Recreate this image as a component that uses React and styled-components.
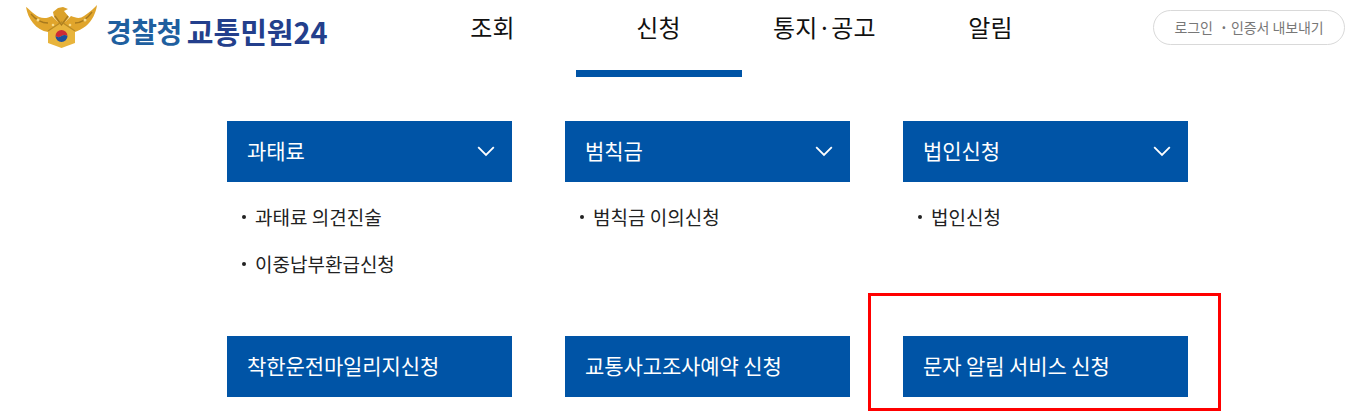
import React from 'react';
import styled, { createGlobalStyle } from 'styled-components';

const GlobalStyle = createGlobalStyle`
  html, body {
    margin: 0;
    padding: 0;
    background: #fff;
    overflow: hidden;
  }
  body {
    font-family: "Noto Sans CJK KR", "Noto Sans", sans-serif;
    color: #222;
  }
  ul {
    margin: 0;
    padding: 0;
    list-style: none;
  }
`;

const topSections = [
  { title: '과태료', links: ['과태료 의견진술', '이중납부환급신청'] },
  { title: '범칙금', links: ['범칙금 이의신청'] },
  { title: '법인신청', links: ['법인신청'] },
];

const bottomSections = ['착한운전마일리지신청', '교통사고조사예약 신청', '문자 알림 서비스 신청'];

const navItems = ['조회', '신청', '통지·공고', '알림'];

const Emblem = () => (
  <EmblemSvg viewBox="0 0 73 44" aria-hidden="true">
    {/* wings */}
    <path
      d="M1 2 C3 3 8 9 14 12 C19 14 23 13 27 11 L33 17 L40 17 L46 11 C51 13 55 14 59 11 C65 7 69 3 72 0 C71 8 67 16 61 21 C57 24 53 26 50 27 L23 27 C17 26 12 23 8 18 C4 13 2 8 1 2 Z"
      fill="#e0a52c"
    />
    {/* head */}
    <path d="M28 7 L33 3 L38 2 L43 4 L39 6 L44 12 L38 20 L35 20 L29 12 Z" fill="#dba12a" />
    {/* shield */}
    <path d="M23 26 L36.5 17 L50 26 L50 38 L36.5 43 L23 38 Z" fill="#e8b43c" />
    <path d="M6 9 C11 15 17 18 23 18 M67 7 C62 14 56 18 50 18 M30 11 L36.5 20 L43 11" fill="none" stroke="#a87a1e" strokeWidth="1.3" />
    <path d="M23 26 L36.5 17 L50 26" fill="none" stroke="#b98a25" strokeWidth="1.2" />
    <circle cx="13" cy="15" r="1.5" fill="#f7dc8c" />
    <circle cx="60" cy="15" r="1.5" fill="#f7dc8c" />
    <circle cx="28" cy="20" r="1.3" fill="#f7dc8c" />
    <circle cx="45" cy="20" r="1.3" fill="#f7dc8c" />
    {/* taegeuk */}
    <path d="M30.5 31 A6 6 0 0 1 42.5 31 C40.5 29.5 38.5 29.5 36.5 31 C34.5 32.5 32.5 32.5 30.5 31 Z" fill="#cf2a35" />
    <path d="M30.5 31 A6 6 0 0 0 42.5 31 C40.5 29.5 38.5 29.5 36.5 31 C34.5 32.5 32.5 32.5 30.5 31 Z" fill="#1d4f9c" />
  </EmblemSvg>
);

const Chevron = () => (
  <ChevronSvg viewBox="0 0 18 11" aria-hidden="true">
    <path d="M1.2 1.2 L9 9 L16.8 1.2" fill="none" stroke="#fff" strokeWidth="1.8" />
  </ChevronSvg>
);

const App = () => {
  return (
    <Page>
      <GlobalStyle />
      <Header>
        <Logo>
          <Emblem />
          <LogoText>
            <LogoAgency>경찰청</LogoAgency>
            <LogoService>교통민원24</LogoService>
          </LogoText>
        </Logo>
        <Nav>
          {navItems.map((item) => (
            <NavItem key={item} $active={item === '신청'}>
              {item}
            </NavItem>
          ))}
        </Nav>
        <LoginButton>
          <span>로그인</span>
          <LoginExport>인증서 내보내기</LoginExport>
        </LoginButton>
      </Header>

      <Content>
        <TopGrid>
          {topSections.map((section) => (
            <div key={section.title}>
              <SectionBar>
                {section.title}
                <Chevron />
              </SectionBar>
              <LinkList>
                {section.links.map((link) => (
                  <LinkItem key={link}>{link}</LinkItem>
                ))}
              </LinkList>
            </div>
          ))}
        </TopGrid>
        <BottomGrid>
          {bottomSections.map((title) => (
            <SectionBar key={title}>{title}</SectionBar>
          ))}
        </BottomGrid>
      </Content>

      <Highlight />
    </Page>
  );
};

const Page = styled.div`
  position: relative;
  width: 1361px;
  height: 417px;
  overflow: hidden;
  background: #fff;
`;

const Header = styled.header`
  display: flex;
  align-items: flex-start;
  height: 77px;
`;

const Logo = styled.div`
  display: flex;
  align-items: flex-start;
  width: 410px;
  padding: 5px 0 0 25px;
  box-sizing: border-box;
`;

const EmblemSvg = styled.svg`
  width: 73px;
  height: 44px;
  flex: none;
`;

const LogoText = styled.div`
  display: flex;
  gap: 5px;
  margin: 8px 0 0 8px;
  font-size: 28px;
  line-height: 36px;
  font-weight: 700;
  white-space: nowrap;
`;

const LogoAgency = styled.span`
  color: #1f5f9f;
  letter-spacing: -0.5px;
`;

const LogoService = styled.span`
  color: #233f8c;
  font-size: 29px;
  letter-spacing: 0;
`;

const Nav = styled.nav`
  display: flex;
  height: 77px;
`;

const NavItem = styled.a`
  box-sizing: border-box;
  width: 166px;
  height: 77px;
  padding: 9px 1px 0 0;
  text-align: center;
  font-size: 24px;
  line-height: 36px;
  font-weight: 400;
  letter-spacing: 0.2px;
  color: #111;
  border-bottom: 7px solid ${(props) => (props.$active ? '#0054a6' : 'transparent')};
`;

const LoginButton = styled.div`
  display: flex;
  align-items: center;
  justify-content: center;
  gap: 7px;
  box-sizing: border-box;
  width: 192px;
  height: 35px;
  margin: 10px 0 0 79px;
  padding-bottom: 2px;
  border: 1px solid #d9d9d9;
  border-radius: 18px;
  font-size: 14px;
  letter-spacing: -0.1px;
  color: #777;
  white-space: nowrap;
`;

const LoginExport = styled.span`
  &::before {
    content: '·';
    margin-right: 3px;
    font-weight: 700;
  }
`;

const Content = styled.main`
  padding: 44px 0 0 227px;
`;

const TopGrid = styled.div`
  display: grid;
  grid-template-columns: repeat(3, 285px);
  column-gap: 53px;
  height: 215px;
`;

const BottomGrid = styled(TopGrid)`
  height: 61px;
`;

const SectionBar = styled.div`
  display: flex;
  align-items: center;
  justify-content: space-between;
  box-sizing: border-box;
  height: 61px;
  padding: 0 17px 4px 20px;
  background: #0054a6;
  color: #fff;
  font-size: 21px;
  font-weight: 400;
  letter-spacing: -0.1px;
`;

const ChevronSvg = styled.svg`
  width: 18px;
  height: 11px;
  margin-top: 4px;
`;

const LinkList = styled.ul`
  padding: 11px 0 0 14px;
`;

const LinkItem = styled.li`
  position: relative;
  height: 47px;
  padding-left: 14px;
  font-size: 19px;
  line-height: 47px;
  color: #222;

  &::before {
    content: '';
    position: absolute;
    left: 1px;
    top: 22px;
    width: 4px;
    height: 4px;
    border-radius: 50%;
    background: #222;
  }
`;

const Highlight = styled.div`
  position: absolute;
  left: 868px;
  top: 293px;
  width: 353px;
  height: 118px;
  box-sizing: border-box;
  border: 3px solid #f00;
  pointer-events: none;
`;

export default App;
